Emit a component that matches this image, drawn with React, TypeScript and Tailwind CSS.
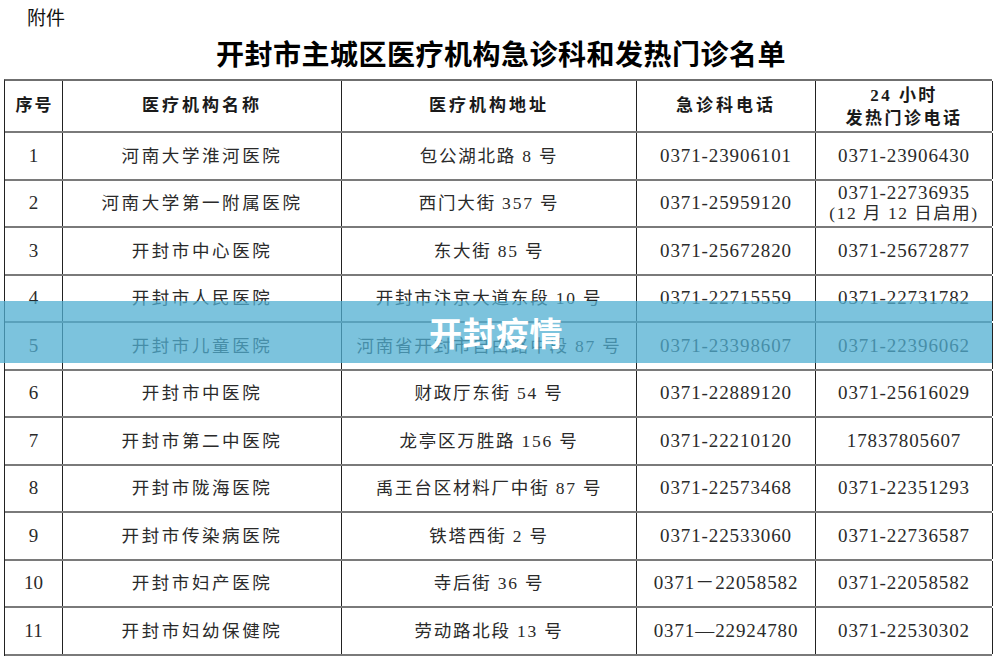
const rows: string[][] = [
  ['1', '河南大学淮河医院', '包公湖北路 8 号', '0371-23906101', '0371-23906430'],
  ['2', '河南大学第一附属医院', '西门大街 357 号', '0371-25959120', '0371-22736935|(12 月 12 日启用)'],
  ['3', '开封市中心医院', '东大街 85 号', '0371-25672820', '0371-25672877'],
  ['4', '开封市人民医院', '开封市汴京大道东段 10 号', '0371-22715559', '0371-22731782'],
  ['5', '开封市儿童医院', '河南省开封市自由路中段 87 号', '0371-23398607', '0371-22396062'],
  ['6', '开封市中医院', '财政厅东街 54 号', '0371-22889120', '0371-25616029'],
  ['7', '开封市第二中医院', '龙亭区万胜路 156 号', '0371-22210120', '17837805607'],
  ['8', '开封市陇海医院', '禹王台区材料厂中街 87 号', '0371-22573468', '0371-22351293'],
  ['9', '开封市传染病医院', '铁塔西街 2 号', '0371-22533060', '0371-22736587'],
  ['10', '开封市妇产医院', '寺后街 36 号', '0371－22058582', '0371-22058582'],
  ['11', '开封市妇幼保健院', '劳动路北段 13 号', '0371—22924780', '0371-22530302'],
];

const cell = 'flex items-center justify-center text-center border-r border-[#222]';
const serif = { fontFamily: '"Liberation Serif", "Noto Sans CJK SC", serif' };

const App = () => {
  return (
    <div className="relative w-[1000px] h-[664px] overflow-hidden bg-white text-[#2a2a2a]" style={serif}>
      {/* 附件 */}
      <div className="h-[32px] pl-[27px] pt-[5px] text-[19px] leading-[24px] text-[#111] font-['Noto_Sans_CJK_SC',sans-serif]">
        附件
      </div>

      {/* title */}
      <div className="h-[47px] flex items-center justify-center pl-[2px] text-[28px] leading-none font-bold text-black tracking-[0.5px]">
        开封市主城区医疗机构急诊科和发热门诊名单
      </div>

      {/* table */}
      <div className="ml-[4px] w-[988px] border-t-2 border-l border-t-[#6f6f6f] border-l-[#222]">
        <div className="grid grid-cols-[58px_279px_295px_179px_177px] h-[52px] border-b-2 border-[#7a7a7a] font-bold text-[17px] text-[#1a1a1a]">
          <div className={`${cell} tracking-[2px] pl-[2px]`}>序号</div>
          <div className={`${cell} tracking-[3px]`}>医疗机构名称</div>
          <div className={`${cell} tracking-[3px]`}>医疗机构地址</div>
          <div className={`${cell} tracking-[3px]`}>急诊科电话</div>
          <div className={`${cell} flex-col leading-[23px] tracking-[2.5px] pt-[1px]`}>
            <span>24 小时</span>
            <span>发热门诊电话</span>
          </div>
        </div>

        {rows.map((r) => (
          <div
            key={r[0]}
            className="grid grid-cols-[58px_279px_295px_179px_177px] h-[47.5px] border-b-2 border-[#7a7a7a]"
          >
            <div className={`${cell} text-[19px]`}>{r[0]}</div>
            <div className={`${cell} text-[17.5px] tracking-[2.6px]`}>{r[1]}</div>
            <div className={`${cell} text-[17.5px] tracking-[1.8px]`}>{r[2]}</div>
            <div className={`${cell} text-[19px] tracking-[0.9px]`}>{r[3]}</div>
            <div className={`${cell} flex-col text-[19px] tracking-[0.9px] leading-[20px]`}>
              {r[4].split('|').map((t, i) => (
                <span key={i} className={i > 0 ? 'text-[17.5px] tracking-[1.5px]' : ''}>
                  {t}
                </span>
              ))}
            </div>
          </div>
        ))}
      </div>

      {/* overlay band */}
      <div className="absolute left-0 top-[301px] w-[992px] h-[62px] bg-[rgba(80,175,210,0.75)] flex items-center justify-center">
        <span className="text-white text-[33px] font-bold leading-none tracking-[0.5px] font-['Noto_Sans_CJK_SC',sans-serif] pt-[1px]">
          开封疫情
        </span>
      </div>
    </div>
  );
};

export default App;
